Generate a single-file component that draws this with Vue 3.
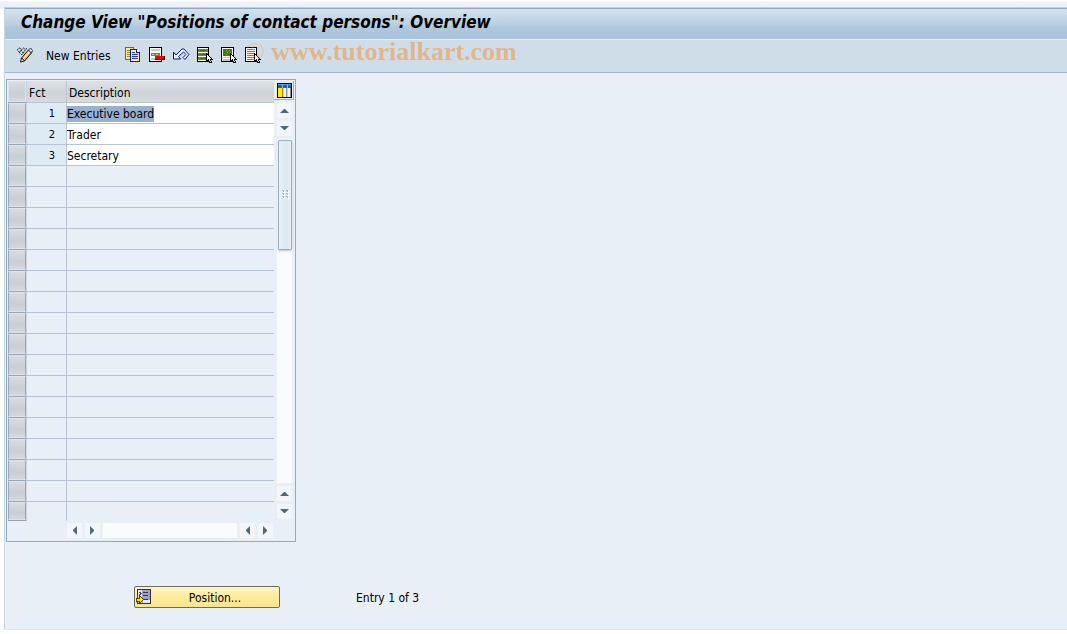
<script setup>
import { onMounted, ref } from 'vue'

const entries = ref([
  { fct: 1, description: 'Executive board' },
  { fct: 2, description: 'Trader' },
  { fct: 3, description: 'Secretary' },
])
const blankRows = 17
const fields = ref([])

onMounted(() => {
  fields.value[0].focus()
  fields.value[0].select()
})
</script>

<template>
  <div class="page">
    <div class="window">
      <header class="titlebar">
        <h1>Change View "Positions of contact persons": Overview</h1>
      </header>

      <div class="toolbar" role="toolbar" aria-label="Application toolbar">
        <button class="tool" aria-label="Display / Change">
          <svg width="16" height="16" viewBox="0 0 16 16">
            <path d="M.5 3.500C.5 1 3.500 0 4 2.500S1.500 6 1.500 4M4.500 4c0-3 3-4 3.500-1.500S5 6.500 5 4.500M8.500 2.500l2-1.500M2 5l3 3M7 5L5 8" fill="none" stroke="#222" stroke-dasharray="2 1" />
            <path d="M4.500 11l7-8 3 3-7 8z" fill="#f6ae4c" stroke="#111" />
            <path d="M6 11l6-7 1 1-6 7z" fill="#ffefc0" />
            <path d="M11.500 3l2-2 2 2.500-1 2.500z" fill="#dfe3fb" stroke="#334" />
            <path d="M3.500 15l1-4 3 3z" fill="#fff" stroke="#111" />
          </svg>
        </button>
        <button class="tool text">New Entries</button>
        <button class="tool" aria-label="Copy As">
          <svg width="16" height="16" viewBox="0 0 16 16" shape-rendering="crispEdges">
            <path d="M.5 .5h8v12h-8z" fill="#f4ec80" stroke="#6b6b30" />
            <path d="M2 3h4v1H2zM2 5h4v1H2zM2 7h4v1H2zM2 9h4v1H2z" fill="#8a8a45" />
            <path d="M5.500 2.500h6l3 3v9h-9z" fill="#fff68e" stroke="#0a10c8" />
            <path d="M11.500 2.500v3h3" fill="#fff" stroke="#0a10c8" />
            <path d="M7 5h3v1H7zM7 7h6v1H7zM7 9h6v1H7zM7 11h6v1H7z" fill="#2634cc" />
          </svg>
        </button>
        <button class="tool" aria-label="Delete">
          <svg width="16" height="16" viewBox="0 0 16 16" shape-rendering="crispEdges">
            <path d="M.5 .5h12v14H.5z" fill="#fff" stroke="#000" />
            <path d="M2 2h9v2H2z" fill="#c8cad8" />
            <path d="M2 6h9v3H2z" fill="#609a20" />
            <path d="M3 7h2v1H3zM7 7h2v1H7z" fill="#b6d47c" />
            <path d="M2 11h5v2H2z" fill="#c8cad8" />
            <path d="M6 9h10v4H6z" fill="#400" />
            <path d="M6 9h9v3H6z" fill="#f00008" />
          </svg>
        </button>
        <button class="tool" aria-label="Undo Change">
          <svg width="17" height="16" viewBox="0 0 17 16">
            <path d="M.5 5v7h7L5.500 9.500l5-4.500 2.500 2.500-3 3 2 2 4-5-5-5.500h-2l-6 6z" fill="#eef2ff" stroke="#10128c" stroke-linejoin="bevel" />
          </svg>
        </button>
        <button class="tool" aria-label="Select All">
          <svg width="16" height="16" viewBox="0 0 16 16" shape-rendering="crispEdges">
            <path d="M.5 .5h11v14H.5z" fill="#fff" stroke="#000" />
            <path d="M1 2h10v3H1zM1 6h10v3H1zM1 10h10v3H1z" fill="#579116" />
            <path d="M3 3h6v1H3zM3 7h6v1H3zM3 11h6v1H3z" fill="#3f720d" />
            <path d="M9.500 6.500v8l2-2 1 3h2l-1-3h2z" fill="#fff" stroke="#000" />
          </svg>
        </button>
        <button class="tool" aria-label="Select Block">
          <svg width="16" height="16" viewBox="0 0 16 16" shape-rendering="crispEdges">
            <path d="M.5 .5h12v14H.5z" fill="#fff" stroke="#000" />
            <path d="M2 2h9v7H2z" fill="#477c05" />
            <path d="M5 3h1v1H5zM8 3h1v1H8zM6 5h1v1H6zM9 5h1v1H9zM5 7h1v1H5z" fill="#82ad4b" />
            <path d="M2 10h9v1H2zM2 12h9v2H2z" fill="#b8c4d3" />
            <path d="M9.500 6.500v8l2-2 1 3h2l-1-3h2z" fill="#fff" stroke="#000" />
          </svg>
        </button>
        <button class="tool" aria-label="Deselect All">
          <svg width="16" height="16" viewBox="0 0 16 16" shape-rendering="crispEdges">
            <path d="M.5 .5h11v14H.5z" fill="#fff" stroke="#000" />
            <path d="M2 2h8v1H2zM2 4h8v1H2zM2 6h8v1H2zM2 8h8v1H2zM2 10h8v1H2zM2 12h8v1H2z" fill="#6d7f92" />
            <path d="M9.500 6.500v8l2-2 1 3h2l-1-3h2z" fill="#fff" stroke="#000" />
          </svg>
        </button>
        <div class="watermark"><span>©</span> www.tutorialkart.com</div>
      </div>

      <main>
        <section class="panel" aria-label="Positions">
          <table>
            <thead>
              <tr>
                <th class="sel"><button aria-label="Select all rows"></button></th>
                <th class="fct">Fct</th>
                <th class="desc">Description</th>
              </tr>
            </thead>
            <tbody>
              <tr v-for="entry in entries" :key="entry.fct" class="filled">
                <td class="sel"><button :aria-label="'Select row ' + entry.fct"></button></td>
                <td class="fct">{{ entry.fct }}</td>
                <td class="desc">
                  <input ref="fields" v-model="entry.description" type="text" spellcheck="false" :aria-label="'Description ' + entry.fct" />
                </td>
              </tr>
              <tr v-for="n in blankRows" :key="'blank' + n">
                <td class="sel"><button :aria-label="'Select blank row ' + n"></button></td>
                <td class="fct"></td>
                <td class="desc"></td>
              </tr>
            </tbody>
          </table>

          <div class="side">
            <button class="config" aria-label="Table settings">
              <svg width="15" height="15" viewBox="0 0 15 15" shape-rendering="crispEdges">
                <path d="M0 0h15v15H0z" fill="#000" />
                <path d="M1 1h13v13H1z" fill="#8b9298" />
                <path d="M1 1h13v4H1z" fill="#1763b5" />
                <path d="M1 1h13v1H1z" fill="#54aae8" />
                <path d="M5 2h1v3H5zM10 2h1v3h-1z" fill="#78c0ee" />
                <path d="M1 5h4v9H1z" fill="#ffee00" />
                <path d="M5 5h1v9H5z" fill="#a88b00" />
                <path d="M7 5h2v9H7zM11 5h2v9h-2z" fill="#f2f4f5" />
                <path d="M6 5h1v9H6zM10 5h1v9h-1z" fill="#c9ced2" />
              </svg>
            </button>
            <div class="vbar">
              <button class="arrow" aria-label="Line up"><svg width="9" height="5" viewBox="0 0 9 5"><path d="M0 5l4-4h1l4 4z" /></svg></button>
              <button class="arrow" aria-label="Line down"><svg width="9" height="5" viewBox="0 0 9 5"><path d="M0 0l4 4h1l4-4z" /></svg></button>
              <div class="vtrack">
                <div class="thumb">
                  <svg width="7" height="9" viewBox="0 0 7 9" shape-rendering="crispEdges">
                    <path d="M1 1h2v2H1zM5 1h2v2H5zM1 4h2v2H1zM5 4h2v2H5zM1 7h2v2H1zM5 7h2v2H5z" fill="#fff" />
                    <path d="M0 0h2v1H0zM4 0h2v1H4zM0 3h2v1H0zM4 3h2v1H4zM0 6h2v1H0zM4 6h2v1H4zM1 1h1v1H1zM5 1h1v1H5zM1 4h1v1H1zM5 4h1v1H5zM1 7h1v1H1zM5 7h1v1H5z" fill="#a3b3c1" />
                  </svg>
                </div>
              </div>
              <button class="arrow" aria-label="Page up"><svg width="9" height="5" viewBox="0 0 9 5"><path d="M0 5l4-4h1l4 4z" /></svg></button>
              <button class="arrow" aria-label="Page down"><svg width="9" height="5" viewBox="0 0 9 5"><path d="M0 0l4 4h1l4-4z" /></svg></button>
            </div>
          </div>

          <div class="hbar">
            <button class="arrow" aria-label="Column left"><svg width="5" height="9" viewBox="0 0 5 9"><path d="M5 0L1 4v1l4 4z" /></svg></button>
            <button class="arrow" aria-label="Column right"><svg width="5" height="9" viewBox="0 0 5 9"><path d="M0 0l4 4v1l-4 4z" /></svg></button>
            <div class="htrack"></div>
            <button class="arrow" aria-label="Page left"><svg width="5" height="9" viewBox="0 0 5 9"><path d="M5 0L1 4v1l4 4z" /></svg></button>
            <button class="arrow" aria-label="Page right"><svg width="5" height="9" viewBox="0 0 5 9"><path d="M0 0l4 4v1l-4 4z" /></svg></button>
          </div>
        </section>

        <footer>
          <button class="position">
            <svg width="16" height="16" viewBox="0 0 16 16" shape-rendering="crispEdges">
              <path d="M1 0h14v15H1z" fill="#303050" />
              <path d="M2 1h4v13H2z" fill="#e2e5ef" />
              <path d="M6 1h8v13H6z" fill="#9da2c4" />
              <path d="M7 3h5v1H7zM7 6h5v1H7zM7 10h5v1H7z" fill="#34385f" />
              <path d="M7 11h7v3H7z" fill="#e8eaf4" />
              <path d="M3 3h2v1H3zM4 4h2v1H4zM3 5h2v1H3z" fill="#4a4e70" />
              <path d="M.5 9.500h3v-3l4 4-4 4v-2h-3z" fill="#ffe600" stroke="#4d4500" />
            </svg>
            <span>Position...</span>
          </button>
          <output>Entry 1 of 3</output>
        </footer>
      </main>
    </div>
  </div>
</template>

<style>
body {
  margin: 0;
  background: #fff;
}
</style>

<style scoped>
.page {
  box-sizing: border-box;
  min-height: 100vh;
  display: flex;
  padding: 1px 0 4px 4px;
  background: linear-gradient(#f3f6fa, #e9eff6 7px, #fff 8px) no-repeat 0 1px / 100% 12px #fff;
  font: 12px/16px "DejaVu Sans Condensed", "DejaVu Sans", sans-serif;
  font-stretch: condensed;
  color: #000;
}
.window {
  flex: 1;
  display: flex;
  flex-direction: column;
  margin-top: 6px;
  border-top: 1px solid #c3d0de;
  border-left: 1px solid #c9d5e2;
  border-bottom: 1px solid #dfe5eb;
  background: #e8eff6;
}
button {
  box-sizing: border-box;
  margin: 0;
  padding: 0;
  border: 0;
  border-radius: 0;
  background: none;
  font: inherit;
  color: inherit;
}
svg {
  display: block;
}
.titlebar {
  box-sizing: border-box;
  height: 32px;
  padding: 3px 16px;
  border-top: 1px solid #93a9c0;
  border-bottom: 1px solid #e6eff8;
  background: linear-gradient(#d3e2ef, #bcd0df 50%, #afc8df 60%, #aac2dc);
}
h1 {
  margin: 0;
  font-size: 17px;
  line-height: 20px;
  font-weight: bold;
  font-style: italic;
  white-space: nowrap;
}
.toolbar {
  position: relative;
  box-sizing: border-box;
  height: 33px;
  display: flex;
  align-items: center;
  gap: 8px;
  padding: 0 0 2px 12px;
  border-bottom: 1px solid #a2b6cc;
  background: #cfdde8;
}
.tool {
  flex: none;
  width: 16px;
}
.tool.text {
  width: auto;
  margin: 0 6px 0 5px;
  padding-top: 2px;
}
.watermark {
  position: absolute;
  left: 240px;
  top: -3px;
  font: bold 26px/30px "Liberation Serif", serif;
  color: rgba(240, 148, 56, 0.55);
  white-space: nowrap;
  pointer-events: none;
}
.watermark span {
  font-weight: normal;
  opacity: 0.6;
}
main {
  flex: 1;
  padding: 6px 0 20px 1px;
}
.panel {
  display: inline-grid;
  grid-template-columns: 266px 21px;
  padding: 1px 0 3px 1px;
  border: 1px solid #8facc7;
  vertical-align: top;
}
table {
  width: 266px;
  table-layout: fixed;
  border-collapse: separate;
  border-spacing: 0;
}
th,
td {
  box-sizing: border-box;
  height: 21px;
  padding: 0;
  border-bottom: 1px solid #b8c4d5;
  line-height: 16px;
}
th {
  height: 22px;
  background: linear-gradient(#dde0e3, #cfd4d9 60%, #d7dadd);
  font-weight: normal;
  text-align: left;
}
th.fct,
th.desc {
  padding: 2px 2px 0;
}
.sel {
  width: 19px;
  border-right: 1px solid #ccd5de;
  border-bottom-color: #95a5b7;
}
.sel button {
  display: block;
  width: 18px;
  height: 20px;
  border: 1px solid #e0e4e8;
  border-left-color: #9aa9b9;
  border-right-color: #9aa9b9;
  background: linear-gradient(#d8dce1, #c8ced5 60%, #d4d8dc);
}
th.sel button {
  height: 21px;
  border-color: #dde3e8;
}
.fct {
  width: 40px;
  border-right: 1px solid #b8c4d5;
}
.filled .fct {
  padding: 2px 11px 0 0;
  background: #deebf5;
  font-size: 11px;
  text-align: right;
}
.filled .desc {
  padding-top: 2px;
  background: #fff;
}
input {
  display: block;
  box-sizing: border-box;
  width: 100%;
  height: 16px;
  margin: 0;
  padding: 0;
  border: 0;
  outline: 0;
  background: none;
  font: inherit;
  line-height: 16px;
  color: #000;
  caret-color: transparent;
}
input::selection {
  background: rgba(152, 177, 208, 0.996);
  color: #000;
}
tbody tr:last-child td {
  height: 19px;
  border-bottom-color: transparent;
}
tbody tr:last-child .sel {
  border-bottom-color: #95a5b7;
}
tbody tr:last-child button {
  height: 18px;
}
.side {
  display: flex;
  flex-direction: column;
}
.config {
  align-self: flex-start;
  width: 20px;
  height: 19px;
  padding: 0 0 0 3px;
  border-right: 1px solid #9eb0c2;
  border-bottom: 1px solid #9eb0c2;
}
.vbar {
  flex: 1;
  display: flex;
  flex-direction: column;
  gap: 3px;
  padding: 3px 3px 2px;
}
.arrow {
  flex: none;
  width: 15px;
  height: 15px;
  display: flex;
  align-items: center;
  justify-content: center;
  background: #f2f6fb;
}
.arrow path {
  fill: #51677a;
}
.vtrack {
  flex: 1;
  padding-top: 1px;
  background: #fafbfc;
}
.thumb {
  box-sizing: border-box;
  height: 32%;
  display: flex;
  align-items: center;
  justify-content: center;
  margin-left: 1px;
  border: 1px solid #9cadbe;
  border-radius: 1px;
  background: linear-gradient(90deg, #e9f1f8, #dce8f2 60%, #e8eff5);
  box-shadow: 0 1px 2px #bcc5cd;
}
.hbar {
  display: flex;
  gap: 3px;
  margin: 2px 1px 0 59px;
}
.htrack {
  flex: 1;
  background: #fafbfc;
}
footer {
  display: flex;
  align-items: center;
  margin: 44px 0 0 128px;
}
.position {
  width: 146px;
  height: 22px;
  display: flex;
  align-items: center;
  padding: 0 1px;
  border: 1px solid #6c6b60;
  border-radius: 2px;
  background: linear-gradient(#fff4c4, #feea9b 50%, #fbe58b);
}
.position span {
  flex: 1;
  padding-top: 2px;
  text-align: center;
}
output {
  margin-left: 76px;
  padding-top: 2px;
}
</style>
